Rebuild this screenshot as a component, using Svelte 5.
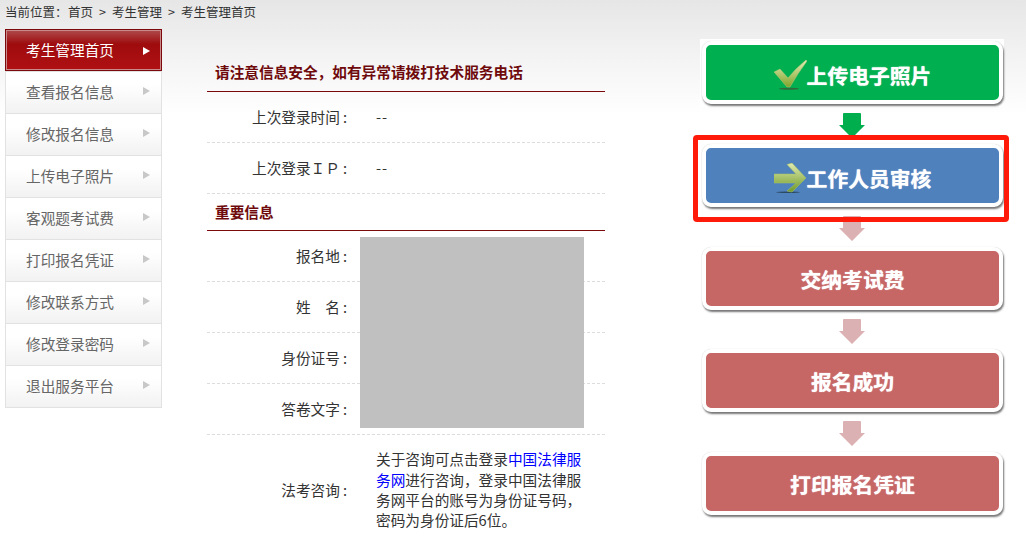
<script>
	const menu = ['考生管理首页', '查看报名信息', '修改报名信息', '上传电子照片', '客观题考试费', '打印报名凭证', '修改联系方式', '修改登录密码', '退出服务平台'];
	const tail = ['交纳考试费', '报名成功', '打印报名凭证'];
	const info = ['报名地', '姓\u3000名', '身份证号', '答卷文字'];
</script>

<div class="page">
	<div class="crumbs">
		<span class="where">当前位置&#xFF1A;</span><span>首页</span><span class="sep">&gt;</span><span>考生管理</span><span class="sep">&gt;</span><span>考生管理首页</span>
	</div>
	<div class="main">
		<ul class="menu">
			{#each menu as item, i}
				<li class:active={i === 0}>
					<span>{item}</span>
					<i class="tri"></i>
				</li>
			{/each}
		</ul>

		<div class="center">
			<h3 class="head first">请注意信息安全&#xFF0C;如有异常请拨打技术服务电话</h3>
			<div class="row"><label>上次登录时间<b>:</b></label><span class="val">--</span></div>
			<div class="row"><label>上次登录&#xFF29;&#xFF30;<b>:</b></label><span class="val">--</span></div>
			<h3 class="head second">重要信息</h3>
			<div class="block">
				{#each info as name}
					<div class="row"><label>{name}<b>:</b></label></div>
				{/each}
				<div class="mask"></div>
			</div>
			<div class="row consult">
				<label>法考咨询<b>:</b></label>
				<p>关于咨询可点击登录<a href="#top">中国法律服务网</a>进行咨询&#xFF0C;登录中国法律服务网平台的账号为身份证号码&#xFF0C;密码为身份证后6位。</p>
			</div>
		</div>

		<div class="flow">
			<div class="step">
				<div class="card green">
					<svg class="ic" width="33" height="30" viewBox="0 0 33 30">
						<defs>
							<linearGradient id="g1" x1="0" y1="0" x2="0" y2="1">
								<stop offset="0" stop-color="#e6edb8" />
								<stop offset="1" stop-color="#7ea52c" />
							</linearGradient>
						</defs>
						<ellipse cx="15" cy="28.8" rx="10" ry="1" fill="#2f6a3c" />
						<path d="M0 12 L6 9 L14 18 Q22 8 32 0 L33 1 Q24 13 16 27 L13 27 Z" fill="url(#g1)" stroke="#b3c673" stroke-width=".5" />
					</svg>
					<span>上传电子照片</span>
				</div>
			</div>
			<svg class="down" width="26" height="25" viewBox="0 0 26 25"><path d="M4 1Q4 0 5 0H21Q22 0 22 1V12H26L13 25L0 12H4Z" fill="#00ae4e" /></svg>
			<div class="step current">
				<div class="card blue">
					<svg class="ic" width="33" height="30" viewBox="0 0 33 30">
						<defs>
							<linearGradient id="g2" x1="0" y1="0" x2="0" y2="1">
								<stop offset="0" stop-color="#e2ecb0" />
								<stop offset="1" stop-color="#6f9a28" />
							</linearGradient>
						</defs>
						<ellipse cx="14" cy="29.3" rx="12" ry="0.8" fill="#2d4a63" />
						<path d="M0 11H22L13 1.500L18 0L32 15L18 29L13 28L22 20H0Z" fill="url(#g2)" stroke="#a9c060" stroke-width=".5" />
					</svg>
					<span>工作人员审核</span>
				</div>
			</div>
			{#each tail as label, i}
				<svg class="down" class:tight={i === 1} width="26" height="25" viewBox="0 0 26 25"><path d="M4 1Q4 0 5 0H21Q22 0 22 1V12H26L13 25L0 12H4Z" fill="#dcb1b3" /></svg>
				<div class="step">
					<div class="card red"><span>{label}</span></div>
				</div>
			{/each}
		</div>
	</div>
</div>

<style>
	:global(body) {
		background: #fff;
	}

	.page {
		width: 1026px;
		height: 542px;
		overflow: hidden;
		font-family: "Noto Sans CJK SC", "Liberation Sans", sans-serif;
		color: #333;
		background: linear-gradient(#e6e6e6 0, #f4f4f4 60px, #fff 115px);
	}

	.crumbs {
		height: 29px;
		padding: 3px 0 0 5px;
		box-sizing: border-box;
		font-size: 12.5px;
		line-height: 18px;
		display: flex;
	}

	.where {
		width: 63px;
	}

	.sep {
		width: 19px;
		text-align: center;
	}

	.main {
		display: flex;
		align-items: flex-start;
	}

	.menu {
		width: 157px;
		margin: 0 0 0 5px;
		padding: 0;
		list-style: none;
		border-bottom: 1px solid #e2e2e2;
	}

	.menu li {
		height: 42px;
		box-sizing: border-box;
		padding: 0 0 2px 20px;
		display: flex;
		align-items: center;
		font-size: 14.67px;
		color: #666;
		border: 1px solid #e2e2e2;
		border-bottom: 0;
		background: linear-gradient(#fff 30%, #f2f2f2);
		position: relative;
	}

	.menu li.active {
		color: #fff;
		border: 1px solid #7c0a0c;
		box-shadow: inset 0 0 0 1px #c98a8a;
		background: linear-gradient(#b04c4c 0, #9e0c0e 35%, #b01013);
	}

	.tri {
		position: absolute;
		left: 137px;
		top: 15px;
		border-left: 7px solid #c8c8c8;
		border-top: 4px solid transparent;
		border-bottom: 4px solid transparent;
	}

	.active .tri {
		top: 17px;
		border-left-color: #fff;
	}

	.center {
		width: 398px;
		margin-left: 45px;
		margin-top: 27px;
		font-size: 14.67px;
	}

	.head {
		margin: 0;
		padding-left: 8px;
		box-sizing: border-box;
		font-size: 14.67px;
		font-weight: bold;
		color: #6f0a0c;
		border-bottom: 1px solid #7a0a0c;
	}

	.head.first {
		height: 36px;
		line-height: 31px;
	}

	.head.second {
		height: 37px;
		line-height: 35px;
	}

	.row {
		height: 51px;
		padding-bottom: 2px;
		box-sizing: border-box;
		display: flex;
		align-items: center;
		border-bottom: 1px dashed #ddd;
	}

	.row label {
		width: 140px;
		flex: none;
		text-align: right;
	}

	.row label b {
		font-weight: normal;
		padding-left: 3px;
	}

	.val {
		margin-left: 29px;
		letter-spacing: 1px;
	}

	.block {
		position: relative;
	}

	.mask {
		position: absolute;
		left: 153px;
		top: 6px;
		width: 224px;
		height: 191px;
		background: #c0c0c0;
	}

	.consult {
		height: 112px;
		padding-bottom: 4px;
		border-bottom: 0;
	}

	.consult p {
		margin: 0 0 0 29px;
		width: 208px;
		line-height: 20.300px;
		position: relative;
		top: 1px;
	}

	.consult a {
		color: #00f;
		text-decoration: none;
	}

	.flow {
		width: 304px;
		margin-left: 95px;
		margin-top: 10px;
		display: flex;
		flex-direction: column;
		align-items: center;
	}

	.step {
		width: 304px;
		height: 68px;
		padding: 2px 1px 3px 2px;
		box-sizing: border-box;
		background: #fff;
		flex: none;
	}

	.card {
		height: 100%;
		box-sizing: border-box;
		border: 4px solid #fff;
		border-radius: 9px;
		box-shadow: 1px 2px 2px 0 #777, 0 0 1px #ccc;
		display: flex;
		align-items: center;
		justify-content: center;
		font-size: 20.8px;
		font-weight: bold;
		color: #fff;
		text-shadow: 0 0 1px #fff;
	}

	.green {
		background: #00b050;
		padding-top: 4px;
	}

	.blue {
		background: #4f81bd;
		padding-top: 4px;
	}

	.red {
		background: #c66766;
	}

	.ic {
		flex: none;
	}

	.down {
		flex: none;
		display: block;
		margin: 6px 0 4px;
	}

	.down.tight {
		margin-bottom: 3px;
	}

	.current {
		position: relative;
	}

	.current::after {
		content: "";
		position: absolute;
		left: -7px;
		top: -7px;
		width: 316px;
		height: 87px;
		box-sizing: border-box;
		border: 5px solid #ff1a0a;
		border-radius: 4px;
	}
</style>
